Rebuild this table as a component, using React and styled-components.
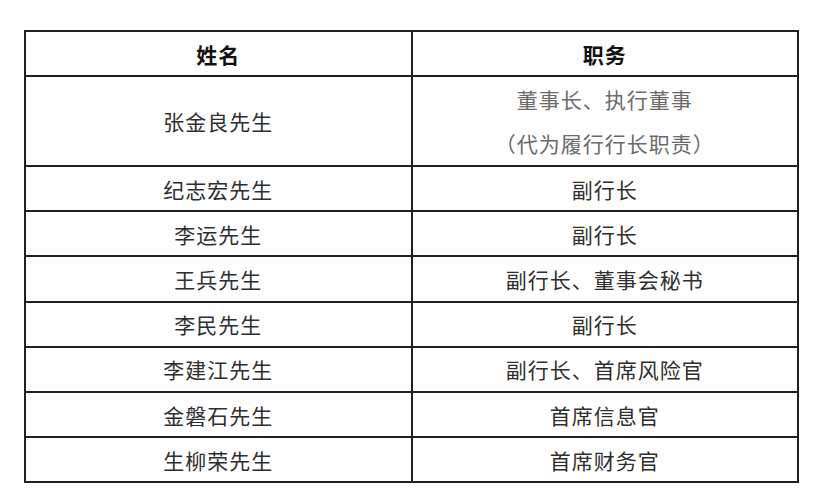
import styled, { createGlobalStyle } from "styled-components";

const GlobalStyle = createGlobalStyle`
  html, body {
    margin: 0;
    padding: 0;
    background: #ffffff;
  }
  body {
    font-family: "Liberation Serif", "Noto Sans CJK SC", serif;
  }
`;

const rows = [
  { name: "纪志宏先生", role: "副行长" },
  { name: "李运先生", role: "副行长" },
  { name: "王兵先生", role: "副行长、董事会秘书" },
  { name: "李民先生", role: "副行长" },
  { name: "李建江先生", role: "副行长、首席风险官" },
  { name: "金磐石先生", role: "首席信息官" },
  { name: "生柳荣先生", role: "首席财务官" },
];

export default function App() {
  return (
    <Page>
      <GlobalStyle />
      <Table>
        <thead>
          <tr>
            <HeadCell>姓名</HeadCell>
            <HeadCell>职务</HeadCell>
          </tr>
        </thead>
        <tbody>
          <tr>
            <Cell $h={88}>张金良先生</Cell>
            <Cell $h={88} $muted>
              <Line>董事长、执行董事</Line>
              <Line>（代为履行行长职责）</Line>
            </Cell>
          </tr>
          {rows.map((r) => (
            <tr key={r.name}>
              <Cell>{r.name}</Cell>
              <Cell>{r.role}</Cell>
            </tr>
          ))}
        </tbody>
      </Table>
    </Page>
  );
}

const Page = styled.div`
  width: 828px;
  height: 500px;
  padding: 30px 0 0 24px;
  box-sizing: border-box;
`;

const Table = styled.table`
  width: 775px;
  border-collapse: collapse;
  table-layout: fixed;
  border: 2px solid #202020;
`;

const HeadCell = styled.th`
  height: 43px;
  padding: 0;
  border: 2px solid #202020;
  font-family: "Noto Sans CJK SC", sans-serif;
  font-size: 21px;
  font-weight: 700;
  letter-spacing: 1px;
  color: #111;
  text-align: center;
  vertical-align: middle;
`;

const Cell = styled.td`
  height: ${({ $h }) => $h || 43.2}px;
  padding: 0;
  border: 2px solid #202020;
  font-family: "Noto Sans CJK SC", sans-serif;
  font-size: 21px;
  font-weight: 400;
  letter-spacing: 1px;
  color: ${({ $muted }) => ($muted ? "#6a6a6a" : "#2e2e2e")};
  text-align: center;
  vertical-align: middle;
`;

const Line = styled.div`
  line-height: 44px;
`;
